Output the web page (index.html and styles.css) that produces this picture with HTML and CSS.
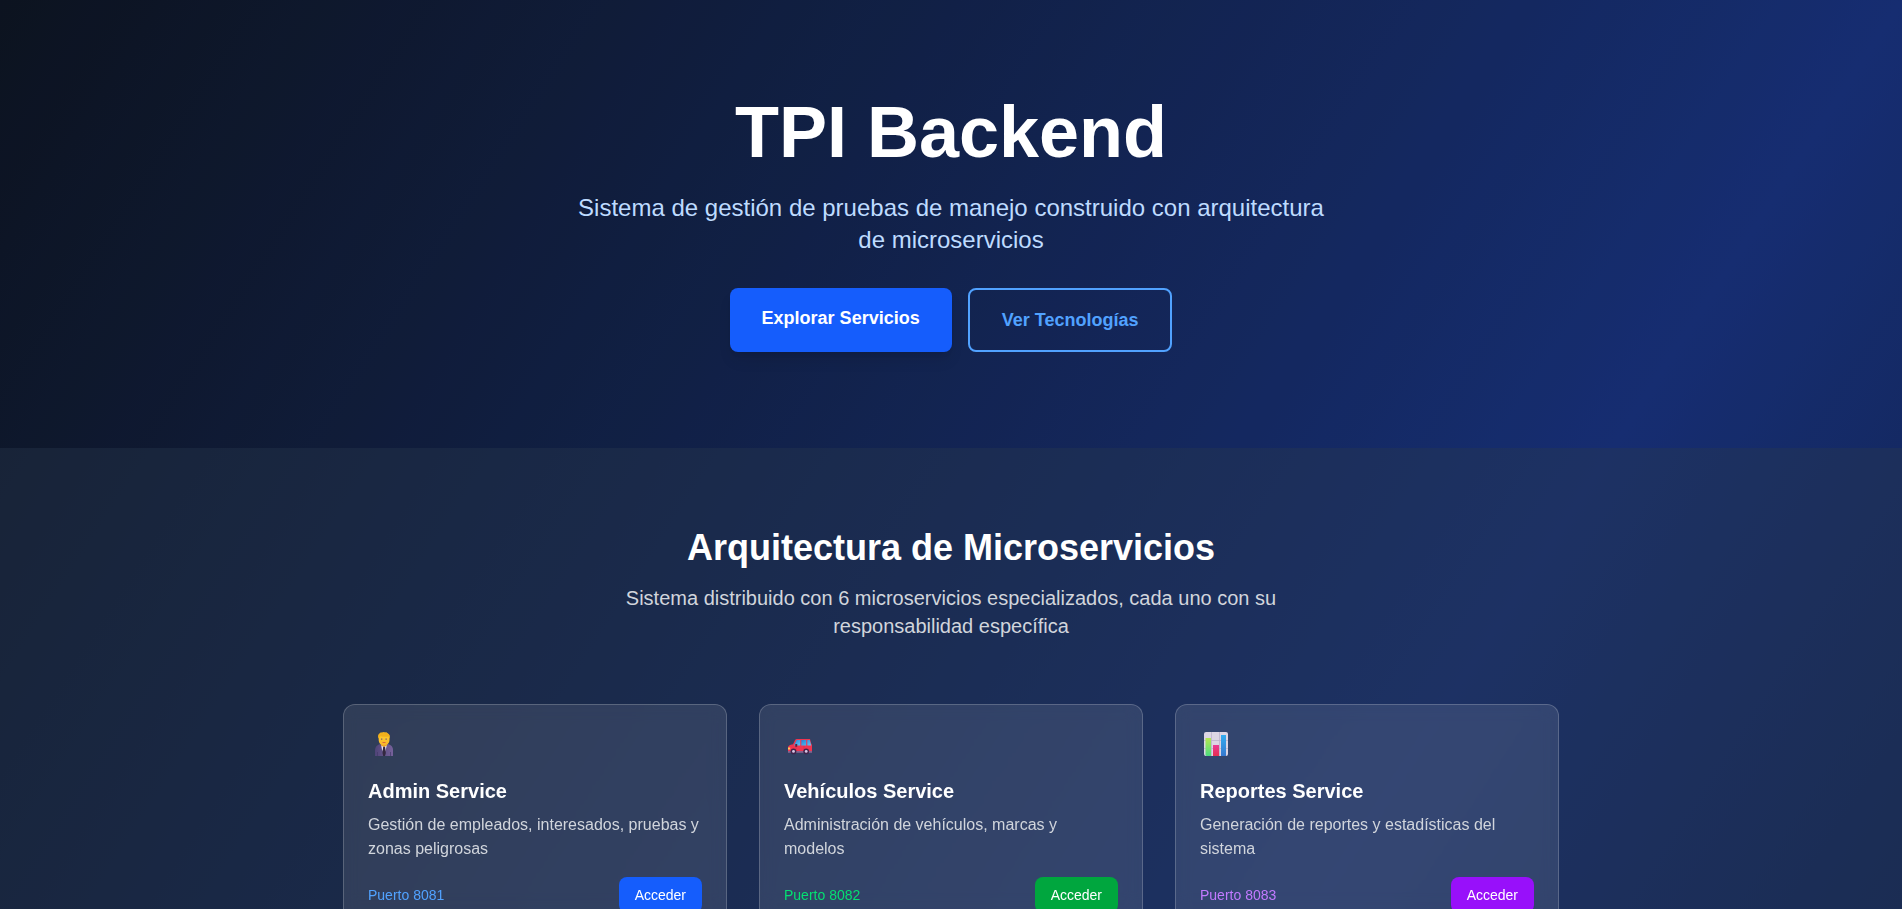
FILE: index.html
```html
<!DOCTYPE html>
<html lang="es">
<head>
<meta charset="utf-8">
<meta name="viewport" content="width=device-width, initial-scale=1">
<title>TPI Backend</title>
<link rel="stylesheet" href="styles.css">
</head>
<body>
<header class="hero">
  <h1 class="hero-title">TPI Backend</h1>
  <p class="hero-text">Sistema de gestión de pruebas de manejo construido con arquitectura de microservicios</p>
  <nav class="hero-actions">
    <a class="btn btn-primary" href="#servicios">Explorar Servicios</a>
    <a class="btn btn-outline" href="#tecnologias">Ver Tecnologías</a>
  </nav>
</header>
<main>
  <section class="services" id="servicios">
    <div class="container">
      <div class="section-head">
        <h2 class="section-title">Arquitectura de Microservicios</h2>
        <p class="section-text">Sistema distribuido con 6 microservicios especializados, cada uno con su responsabilidad específica</p>
      </div>
      <div class="card-grid">
        <article class="card">
          <svg class="card-icon" viewBox="0 0 32 32" aria-hidden="true">
            <defs>
              <linearGradient id="suit" x1="0" y1="0" x2="1" y2="0"><stop offset="0" stop-color="#4f4478"/><stop offset="1" stop-color="#76619a"/></linearGradient>
              <linearGradient id="skin" x1="0" y1="0" x2="0" y2="1"><stop offset="0" stop-color="#ffd02e"/><stop offset="1" stop-color="#f8b62b"/></linearGradient>
            </defs>
            <path d="M7 27v-6c0-3 2-5 5-6h8c3.500 1 5 3 5 6v6z" fill="url(#suit)"/>
            <path d="M13 15.500h6l-1.500 6-1.500 3-2-4z" fill="#e9e2f0"/>
            <path d="M15.200 17.500h1.800l.8 6.500-.8 3h-1.800l-.7-3z" fill="#33283f"/>
            <path d="M13 14h6v2.500l-3 1.500-3-1.500z" fill="#e39a27"/>
            <path d="M10.700 8c0-3 2-4.500 5.300-4.500S21.500 5 21.500 8v3c0 3-2.500 5.500-5.500 5.500S10.700 14 10.700 11z" fill="url(#skin)"/>
            <path d="M10.500 9.500c-1-2.500-.5-4.500 1.500-5.500l1-.8 1 .6 1.500-.8 1.500.8 1.500-.6 1 1c2.500 1 2.700 3 2 5.300l-1-2c-3 .6-6 .1-8-.3z" fill="#f2b01c"/>
            <path d="M13 9.500h1.300v1.300H13zM17.500 9.500h1.300v1.300h-1.300z" fill="#765e78"/>
            <path d="M14.500 13.500h3" stroke="#d5563d" stroke-width=".8"/>
            <path d="M9.500 23v4M22.500 23v4" stroke="#433969" stroke-width=".7"/>
          </svg>
          <h3 class="card-title">Admin Service</h3>
          <p class="card-text">Gestión de empleados, interesados, pruebas y zonas peligrosas</p>
          <div class="card-foot">
            <span class="port port-blue">Puerto 8081</span>
            <a class="access access-blue" href="#admin">Acceder</a>
          </div>
        </article>
        <article class="card">
          <svg class="card-icon" viewBox="0 0 32 32" aria-hidden="true">
            <defs>
              <linearGradient id="glass" x1="0" y1="0" x2="1" y2="1"><stop offset="0" stop-color="#2384d5"/><stop offset="1" stop-color="#60c4f5"/></linearGradient>
            </defs>
            <path d="M12.500 10h13.500l1.200 4.500.8 1.500v7H4v-4.500c0-1.600 1.500-2.500 5-3.200l2.200-4.500z" fill="#f03550"/>
            <path d="M12.600 11h3.600v5.500H10z" fill="url(#glass)"/>
            <path d="M17.300 11h4.900v5.500h-4.900zM23.300 11h2.500l1.400 5.500h-3.900z" fill="url(#glass)"/>
            <path d="M11.300 15h1.900v2.800h-1.900z" fill="#59233e"/>
            <path d="M4 18.500h2.200v2H4z" fill="#ffc957"/>
            <path d="M4 22h24v1.800H4z" fill="#87628f"/>
            <path d="M12 18v4M20 17v5" stroke="#cf294a" stroke-width=".5"/>
            <circle cx="9.500" cy="22.400" r="2.900" fill="#40254c"/><circle cx="22.200" cy="22.400" r="2.900" fill="#40254c"/>
            <circle cx="9.500" cy="22.400" r="1.400" fill="#d8c8e5"/><circle cx="22.200" cy="22.400" r="1.400" fill="#d8c8e5"/>
          </svg>
          <h3 class="card-title">Vehículos Service</h3>
          <p class="card-text">Administración de vehículos, marcas y modelos</p>
          <div class="card-foot">
            <span class="port port-green">Puerto 8082</span>
            <a class="access access-green" href="#vehiculos">Acceder</a>
          </div>
        </article>
        <article class="card">
          <svg class="card-icon" viewBox="0 0 32 32" aria-hidden="true">
            <defs>
              <linearGradient id="bar-a" x1="0" y1="0" x2="0" y2="1"><stop offset="0" stop-color="#b5e651"/><stop offset="1" stop-color="#4bdc80"/></linearGradient>
              <linearGradient id="bar-b" x1="0" y1="0" x2="0" y2="1"><stop offset="0" stop-color="#e93995"/><stop offset="1" stop-color="#e72e50"/></linearGradient>
              <linearGradient id="bar-c" x1="0" y1="0" x2="0" y2="1"><stop offset="0" stop-color="#32abef"/><stop offset="1" stop-color="#3678cf"/></linearGradient>
            </defs>
            <rect x="4" y="3" width="24" height="24" rx="2" fill="#dcd5e4"/>
            <path d="M11.500 3v24M19.500 3v24M4 11.500h24M4 19.500h24" stroke="#bcb2ca" stroke-width=".8"/>
            <path d="M5.500 9h5.500v18H6.500l-1-1z" fill="url(#bar-a)"/>
            <path d="M13 16h6v11h-6z" fill="url(#bar-b)"/>
            <path d="M21 6h5v21h-5z" fill="url(#bar-c)"/>
          </svg>
          <h3 class="card-title">Reportes Service</h3>
          <p class="card-text">Generación de reportes y estadísticas del sistema</p>
          <div class="card-foot">
            <span class="port port-purple">Puerto 8083</span>
            <a class="access access-purple" href="#reportes">Acceder</a>
          </div>
        </article>
      </div>
    </div>
  </section>
</main>
</body>
</html>
```
FILE: styles.css
```css
*, *::before, *::after { box-sizing: border-box; }

body {
  margin: 0;
  font-family: "Liberation Sans", Arial, sans-serif;
  font-size: 16px;
  line-height: 24px;
  color: #fff;
  background-color: #101828;
  background-image: linear-gradient(to bottom right in oklab, #101828, #1c398e, #101828);
  background-size: 100% 2940px;
}

h1, h2, h3, p { margin: 0; }
a { text-decoration: none; }

.hero {
  padding: 96px 32px;
  text-align: center;
  background: rgb(0 0 0 / 20%);
}
.hero-title { font-size: 72px; line-height: 72px; font-weight: 700; }
.hero-text {
  max-width: 768px;
  margin: 24px auto 32px;
  font-size: 24px;
  line-height: 32px;
  color: #bedbff;
}
.hero-actions { display: flex; flex-wrap: wrap; justify-content: center; gap: 16px; }

.btn {
  padding: 16px 32px;
  border-radius: 8px;
  font-size: 18px;
  line-height: 28px;
  font-weight: 700;
}
.btn-primary {
  color: #fff;
  background: #155dfc;
  box-shadow: 0 10px 15px -3px rgb(0 0 0 / 10%), 0 4px 6px -4px rgb(0 0 0 / 10%);
}
.btn-outline { color: #51a2ff; border: 2px solid #51a2ff; }

.services { padding: 80px 0; background: rgb(30 41 57 / 50%); }
.container { max-width: 1280px; margin: 0 auto; padding: 0 32px; }
.section-head { text-align: center; margin-bottom: 64px; }
.section-title { margin-bottom: 16px; font-size: 36px; line-height: 40px; font-weight: 700; }
.section-text {
  max-width: 672px;
  margin: 0 auto;
  font-size: 20px;
  line-height: 28px;
  color: #d1d5dc;
}

.card-grid {
  display: grid;
  grid-template-columns: repeat(auto-fit, minmax(320px, 1fr));
  gap: 32px;
}
.card {
  padding: 24px;
  border: 1px solid rgb(255 255 255 / 20%);
  border-radius: 12px;
  background: rgb(255 255 255 / 10%);
  backdrop-filter: blur(8px);
}
.card-icon { display: block; width: 32px; height: 32px; margin-bottom: 16px; }
.card-title { margin-bottom: 8px; font-size: 20px; line-height: 28px; font-weight: 700; }
.card-text { margin-bottom: 16px; color: #d1d5dc; }
.card-foot { display: flex; align-items: center; justify-content: space-between; font-size: 14px; line-height: 20px; }

.port-blue { color: #51a2ff; }
.port-green { color: #05df72; }
.port-purple { color: #c27aff; }

.access { padding: 8px 16px; border-radius: 8px; color: #fff; }
.access-blue { background: #155dfc; }
.access-green { background: #00a63e; }
.access-purple { background: #9810fa; }
```
